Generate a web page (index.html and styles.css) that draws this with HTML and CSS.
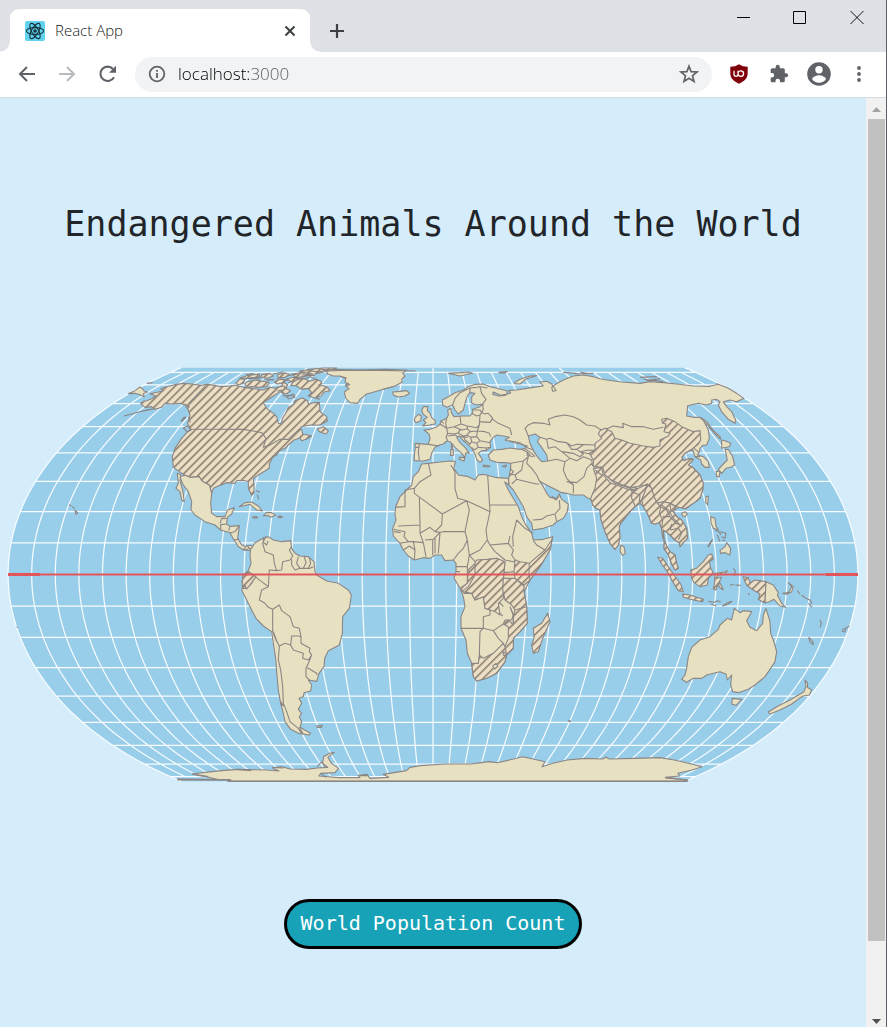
FILE: index.html
```html
<!DOCTYPE html>
<html lang="en">
<head>
<meta charset="utf-8">
<meta name="viewport" content="width=device-width, initial-scale=1">
<title>React App</title>
<link rel="stylesheet" href="styles.css">
</head>
<body>
<div class="window">
  <header class="chrome">
    <div class="tab-strip">
      <div class="tab">
        <svg class="favicon" viewBox="0 0 20 20" aria-hidden="true">
          <rect width="20" height="20" rx="2" fill="#61d3ee"/>
          <g fill="none" stroke="#16323d" stroke-width="1.100">
            <ellipse cx="10" cy="10" rx="8.600" ry="3.400"/>
            <ellipse cx="10" cy="10" rx="8.600" ry="3.400" transform="rotate(60 10 10)"/>
            <ellipse cx="10" cy="10" rx="8.600" ry="3.400" transform="rotate(120 10 10)"/>
          </g>
          <circle cx="10" cy="10" r="1.800" fill="#16323d"/>
        </svg>
        <span class="tab-title">React App</span>
        <button class="icon-button tab-close" aria-label="Close tab">
          <svg width="12" height="12" viewBox="0 0 12 12"><path d="M1.500 1.500l9 9M10.500 1.500l-9 9" fill="none" stroke="#3c4043" stroke-width="2"/></svg>
        </button>
      </div>
      <button class="icon-button new-tab" aria-label="New tab">
        <svg width="16" height="16" viewBox="0 0 16 16"><path d="M8 1v14M1 8h14" fill="none" stroke="#3c4043" stroke-width="2.200"/></svg>
      </button>
      <div class="window-controls">
        <button class="icon-button" aria-label="Minimize"><svg width="14" height="14" viewBox="0 0 14 14"><path d="M1 7.500h13" stroke="#000"/></svg></button>
        <button class="icon-button" aria-label="Maximize"><svg width="14" height="14" viewBox="0 0 14 14"><path d="M.5 1.500h12v12h-12z" fill="none" stroke="#000"/></svg></button>
        <button class="icon-button" aria-label="Close"><svg width="14" height="14" viewBox="0 0 14 14"><path d="M.5 1l13 13M13.500 1l-13 13" fill="none" stroke="#111"/></svg></button>
      </div>
    </div>
    <div class="toolbar">
      <button class="icon-button" aria-label="Back"><svg width="20" height="20" viewBox="0 0 20 20"><path d="M18 10H3.500M10 3l-7 7 7 7" fill="none" stroke="#5f6368" stroke-width="2"/></svg></button>
      <button class="icon-button" aria-label="Forward"><svg width="20" height="20" viewBox="0 0 20 20"><path d="M2 10h14.500M10 3l7 7-7 7" fill="none" stroke="#b9bcbf" stroke-width="2"/></svg></button>
      <button class="icon-button" aria-label="Reload"><svg width="20" height="20" viewBox="0 0 20 20"><path d="M17 13.200A7.200 7.200 0 1 1 16 5" fill="none" stroke="#5f6368" stroke-width="2.100"/><path d="M19 1.800v7h-7z" fill="#5f6368"/></svg></button>
      <div class="omnibox">
        <svg width="18" height="18" viewBox="0 0 18 18" aria-hidden="true"><circle cx="9" cy="9" r="7.300" fill="none" stroke="#5f6368" stroke-width="1.800"/><path d="M9 8v5M9 5v1.800" stroke="#5f6368" stroke-width="1.800"/></svg>
        <input class="address" type="text" value="localhost:3000" aria-label="Address">
        <button class="icon-button star" aria-label="Bookmark this page"><svg width="20" height="20" viewBox="0 0 20 20"><path d="M10 2.200l2.100 5.400 5.900.4-4.500 3.700 1.500 5.700L10 14.300 5 17.400l1.500-5.700L2 8l5.900-.4z" fill="none" stroke="#5f6368" stroke-width="1.700"/></svg></button>
      </div>
      <button class="icon-button" aria-label="uBlock Origin"><svg width="20" height="20" viewBox="0 0 20 20"><path d="M10 .3C7.500 2 4.500 2.800 1.300 2.800V9c0 5.500 3.500 8.500 8.700 10.700 5.200-2.200 8.700-5.200 8.700-10.700V2.800C15.500 2.800 12.500 2 10 .3z" fill="#800009"/><path d="M5 6.800v3.500q0 2 2 2t2-2V6.800v3a2.800 2.700 0 1 0 2.800-2.900q-1.800 0-2.800 1.700" fill="none" stroke="#fff" stroke-width="1.300"/></svg></button>
      <button class="icon-button" aria-label="Extensions"><svg width="20" height="20" viewBox="0 0 24 24"><path fill="#5f6368" d="M20.500 11H19V7c0-1.100-.9-2-2-2h-4V3.500a2.500 2.500 0 0 0-5 0V5H4c-1.100 0-2 .9-2 2v3.800h1.500a2.700 2.700 0 0 1 0 5.400H2V20c0 1.100.9 2 2 2h3.800v-1.500a2.700 2.700 0 0 1 5.400 0V22H17c1.100 0 2-.9 2-2v-4h1.500a2.500 2.500 0 0 0 0-5z"/></svg></button>
      <button class="icon-button profile" aria-label="Profile"><svg width="24" height="24" viewBox="0 0 24 24"><circle cx="12" cy="12" r="11.800" fill="#5f6368"/><circle cx="12" cy="7.700" r="3.700" fill="#fff"/><path d="M5 17q2.500-3.700 7-3.700T19 17q-2.500 3.800-7 3.800T5 17z" fill="#fff"/></svg></button>
      <button class="icon-button" aria-label="Menu"><svg width="20" height="20" viewBox="0 0 20 20"><g fill="#5f6368"><circle cx="10" cy="4" r="1.900"/><circle cx="10" cy="10" r="1.900"/><circle cx="10" cy="16" r="1.900"/></g></svg></button>
    </div>
  </header>
  <div class="viewport">
    <main class="page">
      <h1 class="page-title">Endangered Animals Around the World</h1>
      <svg class="map" viewBox="0 360 866 430" role="img" aria-label="World map">
        <defs>
          <pattern id="hatch" width="17" height="17" patternUnits="userSpaceOnUse" patternTransform="rotate(45)">
            <rect width="17" height="17" fill="#ecdfc6"/>
            <rect width="4.600" height="17" fill="#8c7f6f"/>
          </pattern>
        </defs>
        <path id="sphere" class="water"/>
        <path id="graticule" class="graticule"/>

        <!-- North America -->
        <g class="land" transform="translate(120 360) scale(.333333)">
          <path class="hatched" d="M62,131 70,124 80,122 95,116 108,108 100,105 90,101 112,97 130,92 122,86 140,80 165,74 190,70 215,72 245,76 260,73 285,76 300,80 330,78 345,76 370,82 400,86 430,90 450,82 465,85 485,78 490,66 503,74 498,86 512,92 500,102 480,95 465,105 445,118 430,128 440,145 460,160 470,170 475,190 485,192 487,175 497,160 505,142 520,135 525,122 538,117 548,114 562,122 566,132 580,128 598,127 600,155 620,170 622,183 600,195 570,195 545,200 530,215 545,207 548,222 575,228 560,237 545,242 540,234 522,240 505,255 495,265 478,272 470,285 458,292 448,312 448,325 420,342 400,355 402,380 402,398 395,406 385,385 385,365 375,362 350,362 345,370 320,368 295,378 280,385 275,400 268,375 255,368 245,362 238,350 210,352 195,346 160,322 157,290 165,265 185,235 203,215 212,208 203,190 210,165 204,148 195,135 180,130 155,132 135,130 125,142 105,148 95,140 75,142Z"/>
          <path class="border" d="M260,73 240,95 205,132M212,207 370,208 400,213 425,218 438,235 430,262 450,255 480,238 505,238 530,215M15,167 60,155 88,149 105,146M12,168 88,148M80,70 98,68M182,184 192,172 198,172 185,184M195,132 208,140 202,147M190,204l12,12 12,-6 -12,-12zM205,170l6,18M472,94 484,90 492,108 515,106 525,112 505,116 495,105"/>
          <path d="M25,101 45,92 60,81 68,86 72,93 82,96 70,101 73,110 60,104 45,100Z"/>
          <path class="hatched" d="M592,208 610,200 625,213 618,222 600,216ZM530,60 548,54 570,64 590,58 605,66 600,74 622,82 630,92 612,96 604,108 590,110 598,118 578,112 565,108 575,98 565,85 545,88 530,78 512,76 520,66ZM380,66 405,60 430,64 448,68 440,80 415,82 395,80 380,82 375,72ZM348,70 360,56 375,58 370,70 355,75ZM360,54 385,46 418,42 420,50 390,55ZM425,44 450,40 460,48 440,55 425,51ZM463,67 480,57 498,60 490,68 472,72ZM472,44 495,38 508,44 492,53 475,52ZM500,56 522,52 535,58 515,66ZM516,42 555,36 575,42 560,48 530,53ZM538,34 570,28 610,24 650,24 620,34 585,42 560,44Z"/>
          <path class="border" d="M385,57l40,-4M431,57l32,2M470,56l35,5M500,48l35,-6M545,45l40,2M560,32l45,4M590,38l28,-8M605,28l30,2M460,42l30,-7M520,52l30,6M480,80l12,-2 4,8M502,110l18,-8 5,6M378,44l22,-4M390,52l28,6M440,63l20,-5M552,57l18,-7 18,8M505,68l20,-6M595,76l12,-6"/>
          <path d="M195,346 210,352 238,350 245,362 255,368 268,375 275,400 272,430 275,460 290,470 315,470 322,450 343,443 335,462 322,472 320,492 330,499 358,497 355,520 353,535 365,555 378,560 390,556 410,565 400,573 372,570 355,560 342,540 330,518 302,510 285,495 255,485 225,465 213,450 215,425 205,395 188,372 180,350Z"/>
          <path d="M172,340 182,344 180,362 188,390 193,425 185,420 180,395 168,385 175,370Z"/>
          <path d="M358,440 375,428 395,426 415,438 427,453 410,450 390,433ZM430,468 440,457 455,458 467,466 452,472 445,466Z"/>
          <path class="border" d="M397,472q8,-5 16,0q-8,5 -16,0M473,471q7,-5 14,0q-7,4 -14,0M408,392l12,4M412,404l4,14M302,510 302,494 320,492M320,475 305,476 300,490M330,499 326,512M358,497 345,515 330,518M355,538 340,540"/>
        </g>

        <!-- Greenland, Iceland, Hawaii -->
        <g class="land" transform="translate(225 362) scale(.333333)">
          <path d="M305,28 325,22 400,24 480,22 545,24 533,34 540,42 530,52 532,60 510,72 480,80 455,88 425,96 405,112 398,124 375,122 362,108 358,90 372,80 362,72 374,68 360,60 362,50 345,42 325,42 308,36Z"/>
          <path d="M503,90 525,88 545,86 554,94 540,102 520,105 505,99Z"/>
          <path class="border" d="M300,27 350,25 460,25 572,27M345,43l20,5M360,70l12,-6M475,82l30,-8"/>
        </g>
        <g class="land" transform="translate(0 360) scale(.333333)">
          <path class="border" d="M207,434l7,4M216,440l8,6M225,451l8,7 -5,5zM50,800l3,3"/>
        </g>

        <!-- South America -->
        <g class="land" transform="translate(220 520) scale(.333333)">
          <path d="M70,90 80,76 92,88 90,105 93,130 85,152 70,165 66,185 70,200 65,210 80,240 95,270 108,295 130,318 155,335 160,370 167,415 170,455 175,510 182,550 190,580 195,605 212,628 235,640 268,645 272,640 250,628 240,622 245,605 238,590 245,580 235,568 245,550 237,535 250,530 252,518 272,513 275,495 265,480 290,484 297,460 312,440 314,415 325,392 358,375 367,340 368,290 388,265 394,225 385,210 355,190 320,183 290,165 285,155 282,125 265,110 240,108 225,100 215,85 212,62 185,65 160,60 145,50 125,57 105,68 95,85Z"/>
          <path class="border" d="M138,48 128,70 135,95 160,105 163,130 170,152 185,150 188,125 210,120 218,108 208,90 215,80M215,118 215,135 225,150 240,145 270,145 280,140M235,110 230,130 240,145M252,108 258,128 250,145M268,112 272,130 265,145M170,152 148,150 145,200 125,210 118,240 135,250 145,262 158,268 178,255 185,272 210,290 220,320 238,325 243,350 235,348 215,348 212,375 220,390 250,400 248,415 265,420 275,405 268,395 270,385 243,370 243,350M275,405 265,430 258,445 258,470 270,482M262,443 290,460 292,465M158,268 158,335 168,360 178,378 195,370 212,375M178,378 175,420 182,450 188,500 190,550 200,575 210,605 235,625 245,640M160,335 172,368M145,200 125,185 105,170 88,158M105,170 95,190 80,205 68,205M88,155 70,163M238,622 250,643M183,545l7,12 -8,-5M287,618l20,-2 -3,6 -14,0M130,52l0,15 10,8 4,-12"/>
          <path class="hatched" d="M70,165 85,155 108,170 95,188 80,207 75,196 67,205 67,185Z"/>
        </g>

        <g transform="translate(380 360) scale(.333333)">
          <!-- Europe and Asia -->
          <g class="land">
            <path d="M250,90 265,80 285,73 310,72 330,80 350,85 380,92 382,102 362,106 340,96 338,103 355,108 375,106 392,98 385,92 410,90 440,85 460,82 490,78 480,66 500,64 515,72 528,92 518,94 515,82 528,72 540,65 555,58 580,48 610,45 640,50 660,56 680,60 725,66 780,70 810,65 850,68 890,72 940,78 990,79 1015,73 1045,85 1070,100 1092,115 1070,125 1050,120 1030,125 1040,140 1055,155 1067,180 1065,190 1045,178 1025,155 1015,135 1020,125 1010,118 995,120 995,130 980,135 955,130 923,137 920,168 940,172 958,172 970,180 985,210 988,235 980,255 968,256 960,265 958,275 952,285 970,290 985,305 988,322 975,322 965,312 962,300 945,290 942,280 938,268 915,280 905,292 912,302 925,296 940,298 932,308 925,315 938,322 960,345 970,370 968,390 960,415 940,430 915,448 905,440 890,445 880,455 890,470 905,480 920,505 922,535 910,548 900,560 900,550 885,540 870,525 858,515 850,510 852,540 862,562 870,575 885,585 890,610 895,625 885,630 875,612 865,585 852,565 853,545 848,530 845,505 838,488 825,492 815,490 802,460 790,440 780,430 765,440 750,455 740,468 722,490 718,500 720,535 715,555 705,568 690,550 675,515 662,475 660,450 648,445 638,435 635,420 625,415 610,405 580,405 560,400 545,398 530,390 510,380 490,370 478,362 490,380 500,400 510,412 530,415 538,402 545,418 565,432 562,455 550,475 530,485 520,495 490,505 458,510 455,490 440,470 430,440 415,415 400,390 386,375 386,355 392,325 392,310 375,308 350,307 330,300 325,285 340,270 365,268 390,264 420,268 435,266 442,258 420,252 395,246 375,240 388,232 370,228 350,225 340,232 330,245 332,262 318,272 305,272 295,280 308,300 300,307 290,298 285,282 275,265 260,250 248,240 238,228 230,232 240,248 255,262 268,280 258,278 254,292 245,280 225,262 210,245 200,243 190,252 178,255 165,262 155,280 150,298 130,303 120,303 103,302 103,285 106,262 105,250 145,253 150,235 147,222 132,210 150,208 168,202 180,192 185,182 200,175 205,165 203,150 213,145 214,158 222,170 245,168 270,168 278,158 278,148 300,140 310,132 290,135 275,130 275,110 285,100 270,98 262,108 255,130 250,150 235,162 225,150 218,135 200,142 188,135 187,120 205,110 225,98Z"/>
            <path class="sea" d="M445,228 465,222 480,232 472,245 485,262 500,285 503,303 485,305 472,290 462,275 450,250Z"/>
            <path d="M130,140 143,140 142,152 150,160 155,173 166,182 165,192 148,195 128,198 138,188 130,180 142,172 130,163 125,152ZM105,173 115,163 124,168 122,182 108,188 103,182Z"/>
            <path d="M238,292 255,293 252,303 238,298ZM213,268h7v18h-9ZM214,252h4v12h-4ZM310,315 330,318 325,321 310,319ZM367,319 380,315 376,322ZM403,68 420,58 450,48 470,47 440,56 420,72 405,71ZM205,40 240,38 265,36 278,40 262,43 240,48Z"/>
            <path class="border" d="M355,37l28,-2M358,39l20,0M550,37l40,3M585,42l55,-2M600,36l32,6M780,52l50,-2M790,57l60,8M800,62l40,-6M1010,70l5,4"/>
            <!-- European borders -->
            <path class="border" d="M218,135 225,115 240,98 270,84 290,82 300,80 322,84M270,84 270,98M300,80 305,100 318,118 308,132M308,135 310,148 305,158 315,162 325,160M278,150 300,150 305,158M275,160 290,168 300,165 305,158M300,165 298,195 290,203 262,198 243,192 240,168M325,160 338,175 330,187 298,185M338,178 355,190 390,205 395,225M298,195 292,213 315,215 328,220 332,230M243,192 222,200 200,205 197,190 200,175M200,205 203,220 198,232 203,242M180,192 200,205M205,220 222,222 235,218 240,208 225,202M222,200 245,210 262,206 262,198M240,208 235,220 250,228 260,226 270,215 292,213M262,206 270,215M260,226 272,232 290,230 300,242 330,248M290,230 292,213M272,232 275,245 268,255M240,230 262,232M250,228 255,240 270,252M275,245 290,250 295,262 282,270M290,250 300,242M295,262 320,264 330,262M282,270 275,262M320,264 318,272M203,228 225,225 235,230M180,182 192,190M145,253 178,258M118,252 115,275 118,302M105,262 118,262"/>
            <!-- West and central Asia -->
            <path class="border" d="M388,242 420,248 438,262 460,270M425,268 440,275 445,290 430,303 392,310M435,266 455,280 465,290M440,285 460,290M440,275 450,285M430,303 425,330 405,345 390,342M445,290 440,310 455,325 470,345 478,362M405,345 410,358 395,372M410,358 440,365 470,372 478,372M390,325 400,335 388,350M458,480 485,478 500,468 525,462 530,485M525,462 540,445 538,420M515,408 528,420 538,408M445,228 435,205 445,195 460,188 490,190 510,195 505,178 525,170 555,165 580,170 600,180 620,195 645,198 660,208 672,210M500,238 510,235 535,245 560,248 575,268 590,268 600,275 625,270 648,272M480,232 500,238 505,265 525,260 545,275 570,295 555,305 530,298 503,303M570,295 590,302 610,290 635,300 638,318M545,275 580,280 600,290 610,282 600,275M610,255 590,268M600,275 620,280 645,282M560,248 575,258 590,253 645,255M555,305 550,330 560,355 580,375 580,400M560,365 590,368 612,350 620,325 635,310M580,375 565,365M672,210 700,198 730,203 728,190 755,200 790,200 820,208 850,202"/>
            <!-- Eastern Asia -->
            <path class="hatched" d="M675,205 660,212 655,222 665,235 645,250 645,270 628,280 640,300 640,320 668,322 675,345 705,370 750,385 780,378 810,375 820,410 830,430 850,425 870,430 890,440 915,446 940,430 960,415 968,390 970,370 960,345 938,322 925,315 932,308 940,298 925,296 912,302 905,292 915,280 938,266 955,252 962,240 960,212 940,215 905,200 885,185 860,175 845,178 848,190 858,192 852,215 870,220 865,228 840,240 840,258 820,262 790,258 750,250 725,240 705,235 695,215Z"/>
            <path class="hatched" d="M640,325 665,322 670,345 690,368 750,390 775,385 802,372 795,395 785,420 780,430 765,440 750,455 740,468 722,490 718,500 720,535 715,555 705,568 690,550 675,515 662,475 660,450 648,445 638,435 632,415 645,385 650,355Z"/>
            <path class="hatched" d="M802,372 815,385 822,410 832,430 850,425 870,430 888,440 880,455 890,470 905,480 920,505 922,535 910,548 900,560 898,548 885,540 870,525 858,515 850,510 852,540 862,562 870,575 885,585 890,610 895,625 885,630 875,612 865,585 852,565 853,545 848,530 845,505 838,488 825,492 815,490 802,460 790,440 785,420 795,395Z"/>
            <path class="border" d="M690,358 720,372 750,382M750,385 768,380 770,390 755,392zM755,395 780,405 778,425M755,395 755,415 765,438M832,430 842,440 838,460 848,480 845,505M842,440 860,450 870,470 888,490 900,495M845,435 865,450 880,475 905,500M870,510 895,505 905,520 895,540M848,470 870,470M870,510 875,492M870,430 872,450 880,455M645,330 665,345M942,265 958,278M945,290 960,290"/>
            <path d="M722,555 732,560 736,580 728,586 720,575ZM978,410 985,408 983,435 977,428ZM905,460 915,455 922,462 915,470 907,467Z"/>
            <path d="M1025,240 1035,242 1052,250 1048,260 1032,263 1025,265 1025,255ZM1035,268 1045,268 1058,290 1064,315 1052,322 1038,325 1025,340 1015,328 1030,312 1042,300 1038,280ZM1008,335 1020,333 1018,350 1010,350Z"/>
            <path d="M962,172 980,185 1000,212 1020,230 1022,238 1005,222 985,198Z"/>
            <path d="M992,470 1005,475 1008,498 1015,510 1000,505 993,490ZM1020,572 1035,560 1040,548 1052,565 1050,585 1035,578 1022,580Z"/>
            <path class="border" d="M985,562 998,538M1005,510 1018,516 1022,525M1012,525 1020,545M1020,515 1038,520 1035,535 1025,530M1026,540 1035,542"/>
            <path class="hatched" d="M833,592 848,595 865,620 882,645 902,672 910,695 895,692 880,668 862,635 845,612ZM908,702 930,705 950,712 970,718 968,725 940,720 910,712ZM932,630 950,625 970,605 985,585 995,582 1000,598 988,605 992,625 1000,638 985,655 982,675 960,680 942,668 935,655Z"/>
            <path class="hatched" d="M1005,640 1035,636 1042,632 1035,642 1012,645 1010,655 1025,652 1018,665 1030,690 1018,682 1015,668 1008,690 1000,688 1004,665Z"/>
          </g>

          <!-- Oceania -->
          <g class="land" transform="translate(780 540)">
            <path class="hatched" d="M310,110 325,113 330,128 345,120 378,125 375,188 368,186 355,178 360,162 340,150 322,138 315,125Z"/>
            <path d="M378,125 400,135 415,158 412,165 425,190 437,202 420,198 402,178 388,185 375,188ZM428,160 445,158 455,140 445,128 460,140 455,155 440,163Z"/>
            <path class="border" d="M270,136l12,-3M286,135l16,1M280,85l6,8 -4,15M328,165l-3,-6M472,152l8,10M485,165l12,10M498,175l12,5 6,12M505,190l11,12M540,240l4,8 -3,14M606,270l12,-6 10,-5M606,274l8,2 4,-8M205,184l15,2M220,188l12,-6 10,4M248,198l14,-10 14,-4 -12,9zM213,192l16,6M507,292l12,14 0,8 -10,-10zM203,20l12,-20"/>
            <path d="M283,205 275,240 262,235 240,255 235,268 210,290 180,300 155,322 145,350 140,385 135,405 125,418 140,427 160,415 185,415 200,405 240,395 258,402 262,420 275,405 272,435 278,455 295,458 325,448 345,435 375,410 392,385 405,365 410,335 400,300 392,280 390,245 378,205 370,225 368,250 350,272 330,262 320,242 335,215 310,212 300,218ZM277,475 305,478 288,496 275,492Z"/>
            <path d="M495,420 503,430 502,442 515,450 508,465 490,468 478,475 455,492 420,510 390,522 385,516 410,500 450,480 475,465 492,455 498,440Z"/>
          </g>

          <!-- Africa -->
          <g class="land">
            <path d="M125,312 145,310 180,306 210,303 226,304 222,325 235,345 265,350 285,360 295,345 310,343 345,352 385,355 387,374 374,366 385,390 400,415 415,440 425,470 435,490 455,520 460,540 490,538 518,530 510,570 480,620 450,660 432,695 440,740 442,790 420,815 400,835 400,865 380,885 375,905 350,940 320,955 290,963 280,950 275,910 262,880 258,840 243,805 243,770 255,740 250,710 240,685 222,655 228,635 228,610 220,600 195,602 185,585 165,585 150,595 130,593 103,600 85,588 70,570 60,550 40,528 38,505 48,480 45,462 47,440 60,410 80,390 95,375 100,350 115,335Z"/>
            <g transform="translate(0 420)">
              <path class="border" d="M145,-110 153,-75 120,-55 103,-35 75,-30 75,20 45,22M103,-35 103,-20 187,42 260,2 233,-5 225,-35 225,-85 212,-105M118,-10 120,75 55,78M260,2 330,35M323,-75 330,35M330,15 410,15M187,42 185,75 165,95 180,97M330,35 318,90 322,120 300,150 270,165M260,2 268,30 255,95 190,95 180,97 175,160M120,75 120,100 130,128M120,100 150,82 165,95M165,115 165,160M158,118 158,165M135,120 160,118 180,97M130,128 138,170M100,125 105,150 103,180M60,130 85,125 100,125 130,128M40,88 75,95 72,110 85,125M42,95 62,98M70,150 88,138 105,150M255,95 262,120 250,145 235,160 220,180M262,120 265,145 268,165 262,200 228,200M240,215 228,215M262,200 262,250 240,265M322,120 330,135 385,130 390,108M330,135 345,155 375,180 400,185 410,180M268,165 285,185M385,130 400,150 395,165 405,180M410,60 435,85 460,100M410,60 398,110 400,140M460,122 470,135 495,150M405,215 372,218 368,260M375,185 372,215M370,235 378,250 368,265M250,280 275,280 285,300 310,290 315,325 330,330 330,345 310,350 310,385 243,385M310,385 340,392 370,372 375,360 395,360 400,345 390,320M310,385 300,395 298,465M340,392 355,415 370,430M370,320 362,310 355,310"/>
              <path class="hatched" d="M518,110 510,150 480,200 450,240 447,225 448,190 465,175 495,150 515,120ZM405,180 420,185 448,190 447,225 450,240 432,255 405,235 402,215ZM370,235 405,235 432,258 432,275 440,320 405,330 395,315 375,300 368,270ZM405,330 440,320 442,370 420,395 400,415 400,445 380,465 375,440 385,415 385,380 370,372 385,360 400,375 400,350ZM290,180 320,178 350,175 375,185 372,215 368,260 370,295 355,310 360,345 345,335 315,325 310,290 285,300 275,280 245,275 265,260 285,225 285,190ZM265,210 285,190 285,225 265,260 245,275 245,262 262,250ZM275,490 295,490 298,465 310,475 340,460 370,430 375,440 380,465 375,485 350,520 320,535 290,543 280,530ZM503,340 510,365 490,410 475,455 460,460 455,435 462,415 460,385 485,370Z"/>
              <path d="M338,498 348,490 354,498 344,507ZM370,455 376,458 375,468 370,465Z"/>
              <path class="border" d="M360,340l8,8M392,325l8,20 0,25"/>
            </g>
          </g>
        </g>

        <!-- Antarctica -->
        <g class="land" transform="translate(160 710) scale(.357143 .333333)">
          <path d="M50,207 165,209 130,200 105,196 90,192 145,185 180,181 220,178 300,180 333,183 315,174 340,170 365,177 410,178 440,174 470,172 455,160 458,140 475,130 488,127 470,142 480,160 500,175 490,188 450,190 445,198 500,203 560,203 555,196 580,193 588,205 640,202 625,193 690,182 700,172 730,167 800,162 870,162 900,158 920,155 945,158 990,147 1015,140 1035,145 1078,155 1070,170 1100,160 1140,150 1190,145 1240,147 1248,141 1258,147 1330,145 1400,143 1440,150 1480,160 1518,170 1490,180 1450,190 1455,198 1415,202 1478,210 1476,214 190,214 198,209 50,210Z"/>
          <path class="border" d="M190,213 1476,213M50,208 198,210M90,192 135,200M215,178 255,182M315,172l30,2M440,170l12,-14 12,16M1142,30l8,4 -6,2M450,190l15,12M560,197l22,0M1415,204l60,6"/>
        </g>

        <g class="equator">
          <path d="M8 574.500H858"/>
          <path class="equator-end" d="M8 574.500H40M826 574.500H858"/>
        </g>
      </svg>
      <button class="count-button">World Population Count</button>
    </main>
    <div class="scrollbar" aria-hidden="true">
      <svg width="20" height="21" viewBox="0 0 20 21"><path d="M6 14l4.500-5 4.500 5z" fill="#a3a3a3"/></svg>
      <div class="track"><div class="thumb"></div></div>
      <svg width="20" height="15" viewBox="0 0 20 15"><path d="M6 7l4.500 5L15 7z" fill="#505050"/></svg>
    </div>
  </div>
</div>
<script src="map.js"></script>
</body>
</html>
```
FILE: styles.css
```css
* { box-sizing: border-box; }

body {
  margin: 0;
  font-family: "Open Sans", "Noto Sans", sans-serif;
  color: #212529;
}

.window {
  display: flex;
  flex-direction: column;
  min-height: 100vh;
  border-right: 1px solid #5d6068;
  background: #d5edfa;
}

.chrome { background: #fff; border-bottom: 1px solid #d3dbe2; }

.icon-button {
  display: flex;
  align-items: center;
  justify-content: center;
  flex: none;
  padding: 0;
  border: 0;
  background: none;
}

.tab-strip {
  display: flex;
  align-items: flex-end;
  height: 52px;
  padding-left: 10px;
  background: #dee1e6;
}

.tab {
  position: relative;
  display: flex;
  align-items: center;
  width: 300px;
  height: 43px;
  padding: 0 14px 0 15px;
  border-radius: 9px 9px 0 0;
  background: #fff;
}

.tab::before,
.tab::after {
  content: "";
  position: absolute;
  bottom: 0;
  width: 10px;
  height: 10px;
}

.tab::before { right: 100%; background: radial-gradient(circle at 0 0, transparent 9px, #fff 10px); }
.tab::after { left: 100%; background: radial-gradient(circle at 100% 0, transparent 9px, #fff 10px); }

.favicon { width: 20px; height: 20px; }

.tab-title {
  flex: 1;
  margin-left: 10px;
  padding-bottom: 2px;
  font-size: 15px;
  font-weight: 300;
  line-height: 20px;
  color: #202124;
}

.new-tab { align-self: center; margin: 9px 0 0 19px; }

.window-controls {
  display: flex;
  align-self: flex-start;
  gap: 43px;
  margin-left: auto;
  padding: 10px 22px 0 0;
}

.toolbar {
  display: flex;
  align-items: center;
  gap: 20px;
  height: 45px;
  padding: 0 17px 1px;
}

.profile { margin: 0 -2px; }

.omnibox {
  display: flex;
  flex: 1;
  align-items: center;
  min-width: 0;
  height: 35px;
  margin-right: -3px;
  margin-left: -2px;
  padding: 0 13px;
  border-radius: 18px;
  background: #f1f3f4;
}

.address {
  flex: 1;
  min-width: 0;
  margin-left: 12px;
  padding: 0 0 1px;
  border: 0;
  outline: 0;
  font-family: inherit;
  font-size: 17px;
  font-weight: 300;
  line-height: 24px;
  color: transparent;
  background: linear-gradient(90deg, #000 72px, #54585c 72px);
  -webkit-background-clip: text;
  background-clip: text;
}

.viewport { display: flex; flex: 1; }

.page {
  display: flex;
  flex: 1;
  flex-direction: column;
  align-items: center;
  min-width: 0;
  padding: 105px 0 78px;
  background: #d5edfa;
}

.page-title {
  margin: 0;
  font-family: "DejaVu Sans Mono", monospace;
  font-size: 35px;
  font-weight: 400;
  line-height: 42px;
  text-align: center;
}

.map { display: block; width: 100%; height: auto; margin: 115px 0 109px; }

.water { fill: #99ceeb; }
.graticule { fill: none; stroke: #f8fcfe; stroke-width: 1.200; }

.land path {
  fill: #e8e1c1;
  stroke: #8b8684;
  stroke-width: 1.100px;
  stroke-linejoin: round;
  vector-effect: non-scaling-stroke;
}

.land .hatched { fill: url(#hatch); }
.land .border { fill: none; }
.land .sea { fill: #99ceeb; }

.equator { fill: none; stroke: #e2565b; stroke-width: 2; }
.equator-end { stroke-width: 3; }

.count-button {
  height: 50px;
  padding: 0 14px 2px;
  border: 3px solid #000;
  border-radius: 25px;
  background: #17a2b8;
  font-family: "DejaVu Sans Mono", monospace;
  font-size: 20px;
  line-height: 30px;
  color: #fff;
}

.scrollbar {
  display: flex;
  flex-direction: column;
  width: 20px;
  background: #f1f1f1;
}

.scrollbar svg { display: block; flex: none; }
.track { flex: 1; padding: 0 1px 0 2px; }
.thumb { height: 92%; background: #c1c1c1; }
```
FILE: map.js
```js
// Equal Earth projection of a sphere centred at (433, 574.5).
const A = [1.340264, -0.081106, 0.000893, 0.003796];
const M = Math.sqrt(3) / 2;
const RAD = Math.PI / 180;
const SCALE = 157;

function project(lon, lat) {
  const l = Math.asin(M * Math.sin(lat * RAD));
  const l2 = l * l;
  const l6 = l2 * l2 * l2;
  const x = lon * RAD * Math.cos(l) / (M * (A[0] + 3 * A[1] * l2 + l6 * (7 * A[2] + 9 * A[3] * l2)));
  const y = l * (A[0] + A[1] * l2 + l6 * (A[2] + A[3] * l2));
  return (433 + SCALE * x).toFixed(1) + "," + (574.5 - SCALE * y).toFixed(1);
}

function meridian(lon, from, to) {
  const points = [];
  const step = from < to ? 2 : -2;
  for (let lat = from; step > 0 ? lat <= to : lat >= to; lat += step) points.push(project(lon, lat));
  return points.join("L");
}

let lines = "";
for (let lon = -180; lon <= 180; lon += 10) {
  const limit = lon % 90 === 0 ? 90 : 80;
  lines += "M" + meridian(lon, -limit, limit);
}
for (let lat = -80; lat <= 80; lat += 10) {
  lines += "M" + project(-180, lat) + "L" + project(180, lat);
}

document.getElementById("sphere").setAttribute("d", "M" + meridian(-180, -90, 90) + "L" + meridian(180, 90, -90) + "Z");
document.getElementById("graticule").setAttribute("d", lines);
```
